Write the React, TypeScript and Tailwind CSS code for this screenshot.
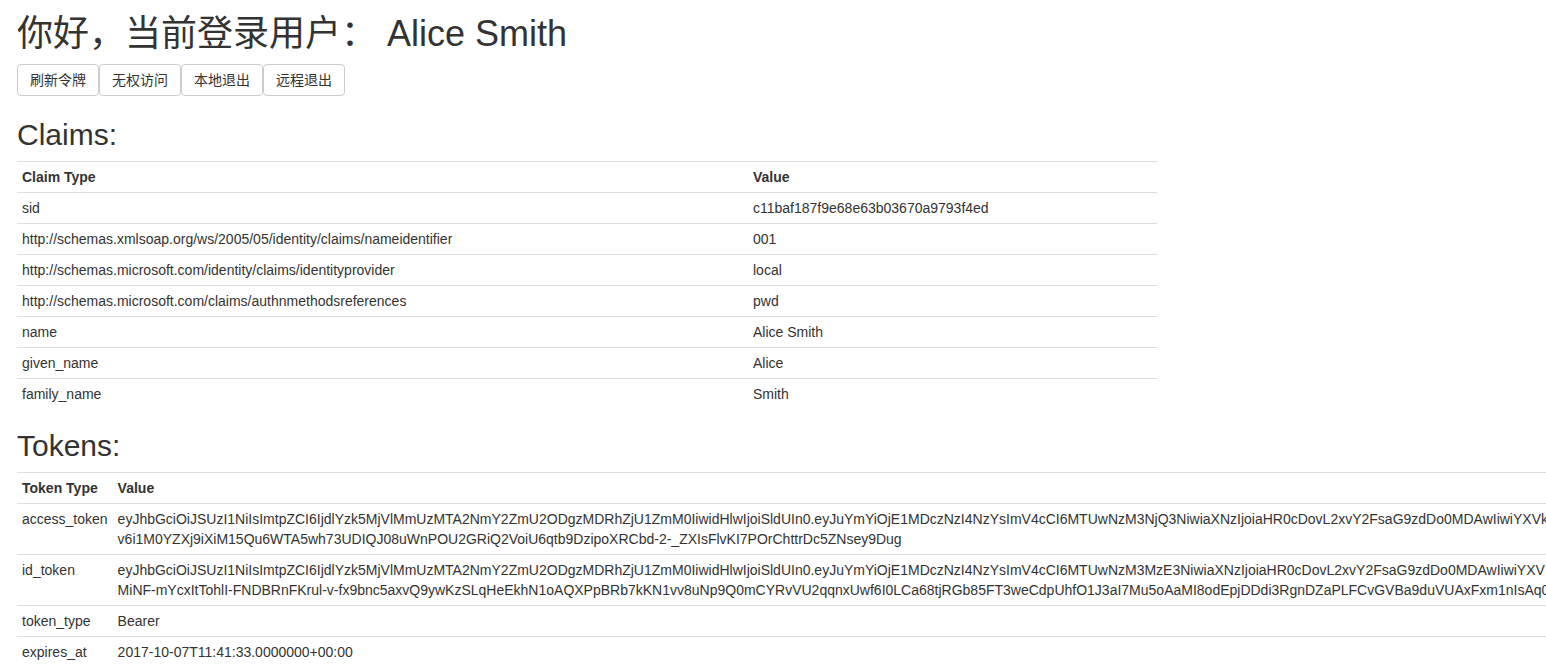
const claims = [
  ['sid', 'c11baf187f9e68e63b03670a9793f4ed'],
  ['http://schemas.xmlsoap.org/ws/2005/05/identity/claims/nameidentifier', '001'],
  ['http://schemas.microsoft.com/identity/claims/identityprovider', 'local'],
  ['http://schemas.microsoft.com/claims/authnmethodsreferences', 'pwd'],
  ['name', 'Alice Smith'],
  ['given_name', 'Alice'],
  ['family_name', 'Smith'],
];

const tokens: [string, string[]][] = [
  [
    'access_token',
    [
      'eyJhbGciOiJSUzI1NiIsImtpZCI6IjdlYzk5MjVlMmUzMTA2NmY2ZmU2ODgzMDRhZjU1ZmM0IiwidHlwIjoiSldUIn0.eyJuYmYiOjE1MDczNzI4NzYsImV4cCI6MTUwNzM3NjQ3NiwiaXNzIjoiaHR0cDovL2xvY2FsaG9zdDo0MDAwIiwiYXVk',
      'v6i1M0YZXj9iXiM15Qu6WTA5wh73UDIQJ08uWnPOU2GRiQ2VoiU6qtb9DzipoXRCbd-2-_ZXIsFlvKI7POrChttrDc5ZNsey9Dug',
    ],
  ],
  [
    'id_token',
    [
      'eyJhbGciOiJSUzI1NiIsImtpZCI6IjdlYzk5MjVlMmUzMTA2NmY2ZmU2ODgzMDRhZjU1ZmM0IiwidHlwIjoiSldUIn0.eyJuYmYiOjE1MDczNzI4NzYsImV4cCI6MTUwNzM3MzE3NiwiaXNzIjoiaHR0cDovL2xvY2FsaG9zdDo0MDAwIiwiYXV',
      'MiNF-mYcxItTohlI-FNDBRnFKrul-v-fx9bnc5axvQ9ywKzSLqHeEkhN1oAQXPpBRb7kKN1vv8uNp9Q0mCYRvVU2qqnxUwf6I0LCa68tjRGb85FT3weCdpUhfO1J3aI7Mu5oAaMI8odEpjDDdi3RgnDZaPLFCvGVBa9duVUAxFxm1nIsAq0',
    ],
  ],
  ['token_type', ['Bearer']],
  ['expires_at', ['2017-10-07T11:41:33.0000000+00:00']],
];

const buttons = ['刷新令牌', '无权访问', '本地退出', '远程退出'];

export default function App() {
  return (
    <div className="h-screen w-full overflow-hidden bg-white px-[17px] text-sm leading-5 text-[#333] font-['Liberation_Sans','Noto_Sans_CJK_SC',sans-serif]">
      <h1 className="mt-[14px] mb-[10px] text-[36px] leading-[1.1] font-normal whitespace-nowrap">
        你好，当前登录用户： Alice Smith
      </h1>

      <div className="flex gap-0">
        {buttons.map((b) => (
          <button
            key={b}
            className="rounded-[4px] border border-[#ccc] bg-white px-3 py-[5px] text-sm leading-5 text-[#333]"
          >
            {b}
          </button>
        ))}
      </div>

      {/* Claims */}
      <h2 className="mt-[22px] mb-[10px] text-[30px] leading-[1.1] font-normal">Claims:</h2>
      <table className="w-[1140px] table-fixed border-collapse">
        <tbody>
          <tr>
            <th className="w-[731px] border-t border-[#ddd] p-[5px] text-left align-top font-bold">
              Claim Type
            </th>
            <th className="border-t border-[#ddd] p-[5px] text-left align-top font-bold">Value</th>
          </tr>
          {claims.map(([type, value]) => (
            <tr key={type}>
              <td className="border-t border-[#ddd] p-[5px] align-top">{type}</td>
              <td className="border-t border-[#ddd] p-[5px] align-top">{value}</td>
            </tr>
          ))}
        </tbody>
      </table>

      {/* Tokens */}
      <h2 className="mt-[20px] mb-[10px] text-[30px] leading-[1.1] font-normal">Tokens:</h2>
      <table className="w-max border-collapse">
        <tbody>
          <tr>
            <th className="border-t border-[#ddd] p-[5px] text-left align-top font-bold whitespace-nowrap">
              Token Type
            </th>
            <th className="border-t border-[#ddd] p-[5px] text-left align-top font-bold">Value</th>
          </tr>
          {tokens.map(([type, lines]) => (
            <tr key={type}>
              <td className="border-t border-[#ddd] p-[5px] align-top whitespace-nowrap">{type}</td>
              <td className="border-t border-[#ddd] p-[5px] align-top">
                {lines.map((l, i) => (
                  <div key={i} className="whitespace-nowrap">
                    {l}
                  </div>
                ))}
              </td>
            </tr>
          ))}
        </tbody>
      </table>
    </div>
  );
}
